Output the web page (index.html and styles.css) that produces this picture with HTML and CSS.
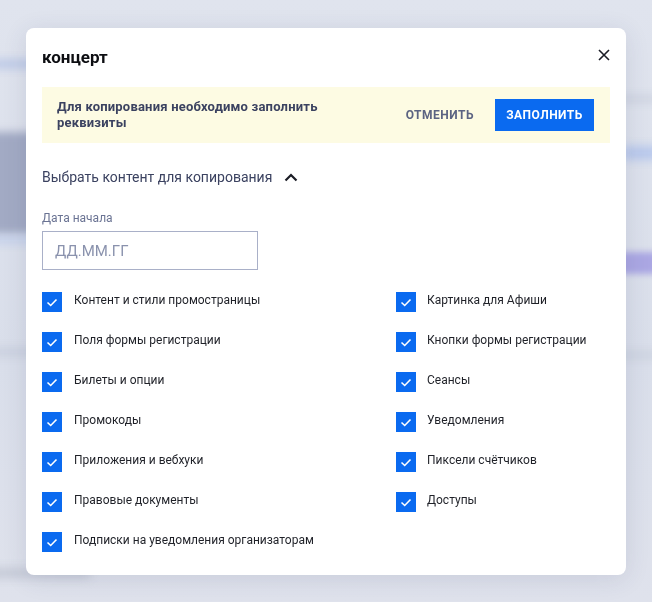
FILE: index.html
```html
<!DOCTYPE html>
<html lang="ru">
<head>
<meta charset="utf-8">
<title>концерт</title>
<link rel="stylesheet" href="styles.css">
</head>
<body>
<div class="backdrop" aria-hidden="true">
  <div class="blob blob-l1"></div>
  <div class="blob blob-l2"></div>
  <div class="blob blob-l3"></div>
  <div class="blob blob-l4"></div>
  <div class="blob blob-l5"></div>
  <div class="blob blob-r1"></div>
  <div class="blob blob-r2"></div>
  <div class="blob blob-r3"></div>
  <div class="blob blob-r4"></div>
</div>
<div class="modal">
  <div class="modal-header">
    <h1 class="modal-title">концерт</h1>
    <button class="close-btn" aria-label="Закрыть">
      <svg width="12" height="12" viewBox="0 0 12 12"><path d="M1 1 L11 11 M11 1 L1 11" stroke="#1b1d26" stroke-width="1.6" fill="none"/></svg>
    </button>
  </div>
  <div class="banner">
    <p class="banner-text">Для копирования необходимо заполнить реквизиты</p>
    <div class="banner-actions">
      <button class="btn-text">Отменить</button>
      <button class="btn-primary">Заполнить</button>
    </div>
  </div>
  <div class="section-toggle">
    <span>Выбрать контент для копирования</span>
    <svg width="14" height="9" viewBox="0 0 14 9"><path d="M1.5 7.5 L7 2 L12.5 7.5" stroke="#1b1d26" stroke-width="2.2" fill="none"/></svg>
  </div>
  <label class="field-label">Дата начала</label>
  <div class="date-input">ДД.ММ.ГГ</div>
  <div class="checks">
    <div class="check"><span class="box"><svg width="20" height="20" viewBox="0 0 20 20"><path d="M5.5 10.5 L8.7 13.5 L14.5 7.5" stroke="#fff" stroke-width="1.6" fill="none"/></svg></span><span class="check-label">Контент и стили промостраницы</span></div>
    <div class="check"><span class="box"><svg width="20" height="20" viewBox="0 0 20 20"><path d="M5.5 10.5 L8.7 13.5 L14.5 7.5" stroke="#fff" stroke-width="1.6" fill="none"/></svg></span><span class="check-label">Картинка для Афиши</span></div>
    <div class="check"><span class="box"><svg width="20" height="20" viewBox="0 0 20 20"><path d="M5.5 10.5 L8.7 13.5 L14.5 7.5" stroke="#fff" stroke-width="1.6" fill="none"/></svg></span><span class="check-label">Поля формы регистрации</span></div>
    <div class="check"><span class="box"><svg width="20" height="20" viewBox="0 0 20 20"><path d="M5.5 10.5 L8.7 13.5 L14.5 7.5" stroke="#fff" stroke-width="1.6" fill="none"/></svg></span><span class="check-label">Кнопки формы регистрации</span></div>
    <div class="check"><span class="box"><svg width="20" height="20" viewBox="0 0 20 20"><path d="M5.5 10.5 L8.7 13.5 L14.5 7.5" stroke="#fff" stroke-width="1.6" fill="none"/></svg></span><span class="check-label">Билеты и опции</span></div>
    <div class="check"><span class="box"><svg width="20" height="20" viewBox="0 0 20 20"><path d="M5.5 10.5 L8.7 13.5 L14.5 7.5" stroke="#fff" stroke-width="1.6" fill="none"/></svg></span><span class="check-label">Сеансы</span></div>
    <div class="check"><span class="box"><svg width="20" height="20" viewBox="0 0 20 20"><path d="M5.5 10.5 L8.7 13.5 L14.5 7.5" stroke="#fff" stroke-width="1.6" fill="none"/></svg></span><span class="check-label">Промокоды</span></div>
    <div class="check"><span class="box"><svg width="20" height="20" viewBox="0 0 20 20"><path d="M5.5 10.5 L8.7 13.5 L14.5 7.5" stroke="#fff" stroke-width="1.6" fill="none"/></svg></span><span class="check-label">Уведомления</span></div>
    <div class="check"><span class="box"><svg width="20" height="20" viewBox="0 0 20 20"><path d="M5.5 10.5 L8.7 13.5 L14.5 7.5" stroke="#fff" stroke-width="1.6" fill="none"/></svg></span><span class="check-label">Приложения и вебхуки</span></div>
    <div class="check"><span class="box"><svg width="20" height="20" viewBox="0 0 20 20"><path d="M5.5 10.5 L8.7 13.5 L14.5 7.5" stroke="#fff" stroke-width="1.6" fill="none"/></svg></span><span class="check-label">Пиксели счётчиков</span></div>
    <div class="check"><span class="box"><svg width="20" height="20" viewBox="0 0 20 20"><path d="M5.5 10.5 L8.7 13.5 L14.5 7.5" stroke="#fff" stroke-width="1.6" fill="none"/></svg></span><span class="check-label">Правовые документы</span></div>
    <div class="check"><span class="box"><svg width="20" height="20" viewBox="0 0 20 20"><path d="M5.5 10.5 L8.7 13.5 L14.5 7.5" stroke="#fff" stroke-width="1.6" fill="none"/></svg></span><span class="check-label">Доступы</span></div>
    <div class="check"><span class="box"><svg width="20" height="20" viewBox="0 0 20 20"><path d="M5.5 10.5 L8.7 13.5 L14.5 7.5" stroke="#fff" stroke-width="1.6" fill="none"/></svg></span><span class="check-label">Подписки на уведомления организаторам</span></div>
  </div>
</div>
</body>
</html>
```
FILE: styles.css
```css
* { box-sizing: border-box; }
html, body { height: 100%; }
body {
  margin: 0;
  padding: 28px 0 0 26px;
  background: #dbe0eb;
  font-family: Roboto, "Noto Sans", "Liberation Sans", sans-serif;
  overflow: hidden;
}
.backdrop {
  position: fixed;
  inset: 0;
  background: linear-gradient(#e0e4ee, #d9deea 60%, #dfe2ec);
  z-index: 0;
}
.blob { position: absolute; filter: blur(5px); }
.blob-l1 { left: -10px; top: 60px; width: 60px; height: 8px; background: #b7c5e6; }
.blob-l2 { left: -10px; top: 132px; width: 60px; height: 102px; background: #a2aac4; filter: blur(4px); }
.blob-l3 { left: -10px; top: 237px; width: 60px; height: 6px; background: #bccbeb; }
.blob-l4 { left: -10px; top: 348px; width: 50px; height: 8px; background: #c8cedd; }
.blob-l5 { left: -10px; top: 568px; width: 100px; height: 10px; background: #c4c9d6; }
.blob-r1 { right: -10px; top: 96px; width: 50px; height: 6px; background: #c9cfdd; }
.blob-r2 { right: -10px; top: 146px; width: 40px; height: 14px; background: #b8c8ec; }
.blob-r3 { right: -10px; top: 252px; width: 60px; height: 22px; background: #aba7e3; filter: blur(3px); }
.blob-r4 { right: -10px; top: 352px; width: 50px; height: 6px; background: #c8cedc; }

.modal {
  position: relative;
  z-index: 1;
  width: 600px;
  background: #fff;
  border-radius: 8px;
  padding: 16px 16px 23px;
  box-shadow: 0 4px 24px rgba(50, 60, 100, 0.12);
}
.modal-header {
  display: flex;
  align-items: center;
  justify-content: space-between;
  height: 26px;
}
.modal-title {
  margin: 0;
  font-size: 17px;
  font-weight: 700;
  color: #0d0e12;
  line-height: 26px;
}
.close-btn {
  border: 0;
  background: none;
  padding: 0;
  margin: -4px -4px 0 0;
  width: 20px;
  height: 20px;
  display: flex;
  align-items: center;
  justify-content: center;
}
.banner {
  margin-top: 17px;
  height: 56px;
  background: #fdfbe3;
  display: flex;
  align-items: center;
  justify-content: space-between;
  padding: 0 16px 0 15px;
}
.banner-text {
  margin: 0;
  width: 290px;
  font-size: 13px;
  line-height: 16px;
  font-weight: 700;
  letter-spacing: 0.2px;
  color: #3b4260;
}
.banner-actions { display: flex; align-items: center; gap: 9px; }
.btn-text, .btn-primary {
  font-family: inherit;
  font-size: 12px;
  font-weight: 700;
  text-transform: uppercase;
  letter-spacing: 0.5px;
  border: 0;
  height: 32px;
  padding: 0 12px;
}
.btn-text { background: none; color: #5b6382; }
.btn-primary { background: #0a6af0; color: #fff; width: 99px; padding: 0; }

.section-toggle {
  margin-top: 24px;
  display: flex;
  align-items: center;
  gap: 12px;
  font-size: 14px;
  line-height: 20px;
  color: #3b4260;
}
.section-toggle svg { margin-top: 1px; }
.field-label {
  display: block;
  margin-top: 23px;
  font-size: 12px;
  line-height: 16px;
  color: #6a7393;
}
.date-input {
  margin-top: 5px;
  width: 216px;
  height: 39px;
  border: 1px solid #a9b0c8;
  padding: 0 12px;
  display: flex;
  align-items: center;
  font-size: 15px;
  color: #8a92ad;
}
.checks {
  margin-top: 22px;
  display: grid;
  grid-template-columns: 354px 1fr;
  row-gap: 20px;
}
.check { display: flex; align-items: flex-start; gap: 12px; }
.box {
  flex: none;
  width: 20px;
  height: 20px;
  background: #0a6af0;
  display: block;
}
.box svg { display: block; }
.check-label {
  font-size: 12px;
  line-height: 16px;
  color: #1f2128;
}
.check:nth-child(2n) { gap: 11px; }
```
